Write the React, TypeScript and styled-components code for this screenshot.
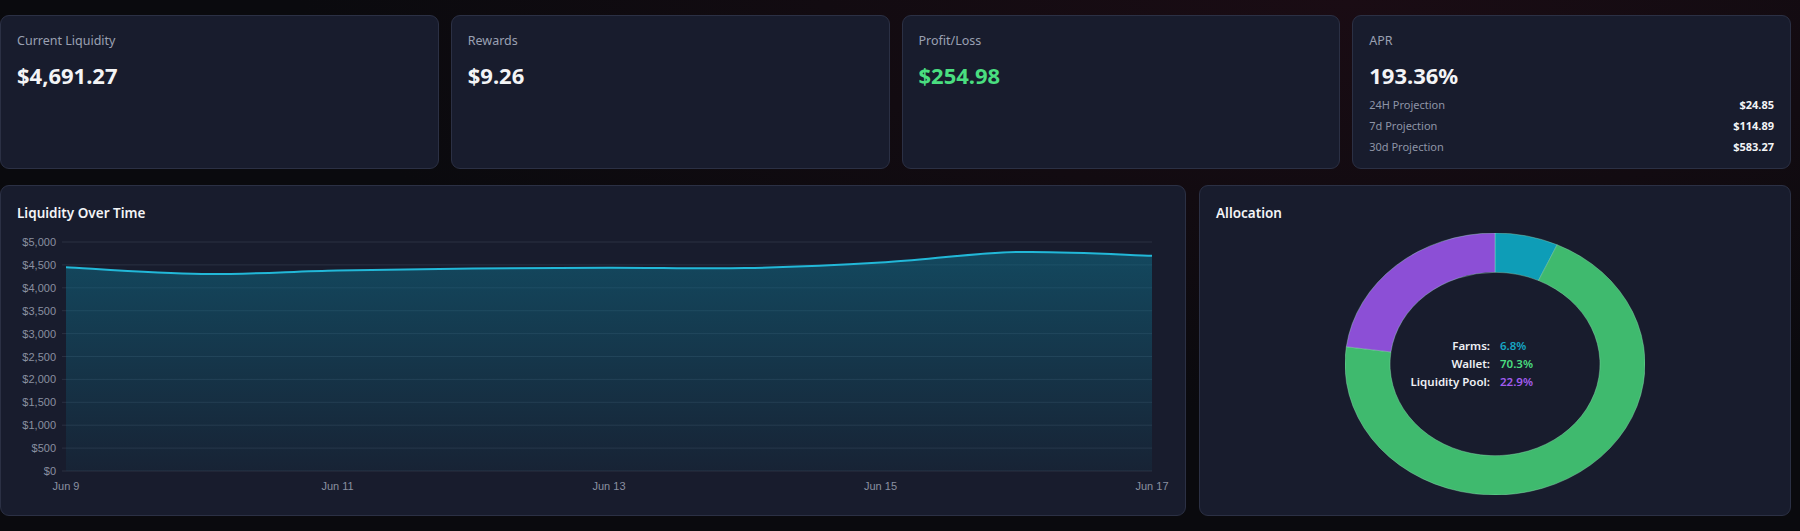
import React from "react";
import styled, { createGlobalStyle } from "styled-components";

const Global = createGlobalStyle`
  html, body { margin: 0; padding: 0; background: #0a0a0e; }
  body { font-family: "Noto Sans", "Open Sans", sans-serif; }
`;

const Page = styled.div`
  width: 1800px; height: 531px; box-sizing: border-box;
  padding: 15px 9px 0 0;
  background: radial-gradient(ellipse at 75% 0%, #1a0c14 0%, #0a0a0e 55%);
  display: flex; flex-direction: column; gap: 16px;
`;
const TopRow = styled.div`
  display: grid; grid-template-columns: repeat(4, 1fr); gap: 12px;
`;
const Card = styled.div<{ $h?: number }>`
  background: #181c2d; border: 1px solid #2b3044; border-radius: 9px;
  box-sizing: border-box; height: ${p => p.$h ?? 154}px;
  padding: 16px 16px; position: relative;
`;
const Label = styled.div`
  font-size: 12.5px; color: #9aa0b2; margin-top: 1px; line-height: 16px;
`;
const Value = styled.div<{ $c?: string }>`
  font-size: 22px; font-weight: 700; color: ${p => p.$c ?? "#f3f4f6"};
  margin-top: 12px; line-height: 28px;
`;
const Rows = styled.div`
  margin-top: 8px; display: flex; flex-direction: column; gap: 5px;
`;
const Row = styled.div`
  display: flex; justify-content: space-between; font-size: 11px; line-height: 16px;
  span:first-child { color: #8e94a6; }
  span:last-child { color: #f3f4f6; font-weight: 700; }
`;
const BottomRow = styled.div`
  display: grid; grid-template-columns: 1186px 1fr; gap: 13px;
`;
const Title = styled.div`
  font-size: 13.5px; font-weight: 600; color: #f3f4f6; line-height: 18px; margin-top: 2px;
`;
const ChartSvg = styled.svg`
  display: block; margin-top: 6px; margin-left: 1px;
`;
const DonutWrap = styled.div`
  position: relative; width: 300px; height: 262px; margin: 11px auto 0;
`;
const Legend = styled.div`
  position: absolute; left: 0; right: 0; top: 105px;
  display: grid; grid-template-columns: 1fr 1fr; column-gap: 10px; row-gap: 3px;
  font-size: 11.5px; font-weight: 600; line-height: 15px;
`;
const LKey = styled.span` text-align: right; color: #eef0f4; `;
const LVal = styled.span<{ $c: string }>` color: ${p => p.$c}; `;

const vals = [4450, 4300, 4380, 4420, 4440, 4430, 4550, 4780, 4700];
const X0 = 48, X1 = 1134, Y0 = 243, YH = 229;
const px = (i: number) => X0 + (i * (X1 - X0)) / 8;
const py = (v: number) => Y0 - (v / 5000) * YH;

function curve() {
  const pts = vals.map((v, i) => [px(i), py(v)]);
  let d = `M${pts[0][0]},${pts[0][1]}`;
  for (let i = 0; i < pts.length - 1; i++) {
    const p0 = pts[i - 1] || pts[i], p1 = pts[i], p2 = pts[i + 1], p3 = pts[i + 2] || p2;
    const c1 = [p1[0] + (p2[0] - p0[0]) / 6, p1[1] + (p2[1] - p0[1]) / 6];
    const c2 = [p2[0] - (p3[0] - p1[0]) / 6, p2[1] - (p3[1] - p1[1]) / 6];
    d += ` C${c1[0]},${c1[1]} ${c2[0]},${c2[1]} ${p2[0]},${p2[1]}`;
  }
  return d;
}

function arc(a0: number, a1: number) {
  const R = 150, r = 105, c = 150;
  const p = (rad: number, a: number) => {
    const t = (a - 90) * Math.PI / 180;
    return `${c + rad * Math.cos(t)},${c + rad * Math.sin(t)}`;
  };
  const large = a1 - a0 > 180 ? 1 : 0;
  return `M${p(R, a0)} A${R},${R} 0 ${large} 1 ${p(R, a1)} L${p(r, a1)} A${r},${r} 0 ${large} 0 ${p(r, a0)} Z`;
}

const slices = [
  { p: 6.8, c: "#0e9db7" },
  { p: 70.3, c: "#3fba6e" },
  { p: 22.9, c: "#8c4fd6" },
];

export default function App() {
  const line = curve();
  let acc = 0;
  return (
    <Page>
      <Global />
      <TopRow>
        <Card><Label>Current Liquidity</Label><Value>$4,691.27</Value></Card>
        <Card><Label>Rewards</Label><Value>$9.26</Value></Card>
        <Card><Label>Profit/Loss</Label><Value $c="#4ade80">$254.98</Value></Card>
        <Card>
          <Label>APR</Label><Value>193.36%</Value>
          <Rows>
            <Row><span>24H Projection</span><span>$24.85</span></Row>
            <Row><span>7d Projection</span><span>$114.89</span></Row>
            <Row><span>30d Projection</span><span>$583.27</span></Row>
          </Rows>
        </Card>
      </TopRow>
      <BottomRow>
        <Card $h={331}>
          <Title>Liquidity Over Time</Title>
          <ChartSvg width={1152} height={275}>
            <defs>
              <linearGradient id="fill" x1="0" y1="0" x2="0" y2="1">
                <stop offset="0" stopColor="#0e7490" stopOpacity="0.5" />
                <stop offset="1" stopColor="#0e7490" stopOpacity="0.08" />
              </linearGradient>
            </defs>
            {Array.from({ length: 11 }).map((_, k) => {
              const v = k * 500;
              const y = py(v);
              return (
                <g key={k}>
                  <line x1={X0 - 4} x2={X1} y1={y} y2={y} stroke="#2a3042" strokeWidth={1} />
                  <text x={38} y={y + 4} textAnchor="end" fontSize={11} fill="#8a90a0"
                    fontFamily="Liberation Sans, Arial, sans-serif">
                    ${v.toLocaleString("en-US")}
                  </text>
                </g>
              );
            })}
            <path d={`${line} L${X1},${Y0} L${X0},${Y0} Z`} fill="url(#fill)" />
            <path d={line} fill="none" stroke="#22b8d8" strokeWidth={2} />
            {[0, 2, 4, 6, 8].map(i => (
              <text key={i} x={px(i)} y={262} textAnchor="middle" fontSize={11} fill="#8a90a0"
                fontFamily="Liberation Sans, Arial, sans-serif">Jun {9 + i}</text>
            ))}
          </ChartSvg>
        </Card>
        <Card $h={331}>
          <Title>Allocation</Title>
          <DonutWrap>
            <svg width={300} height={262} viewBox="0 0 300 300" preserveAspectRatio="none">
              {slices.map((s, i) => {
                const a0 = acc * 3.6; acc += s.p; const a1 = acc * 3.6;
                return <path key={i} d={arc(a0, a1)} fill={s.c} stroke="#9fe6c0" strokeOpacity={0.5} strokeWidth={0.8} />;
              })}
            </svg>
            <Legend>
              <LKey>Farms:</LKey><LVal $c="#16a6c4">6.8%</LVal>
              <LKey>Wallet:</LKey><LVal $c="#4ade80">70.3%</LVal>
              <LKey>Liquidity Pool:</LKey><LVal $c="#a25cf0">22.9%</LVal>
            </Legend>
          </DonutWrap>
        </Card>
      </BottomRow>
    </Page>
  );
}
